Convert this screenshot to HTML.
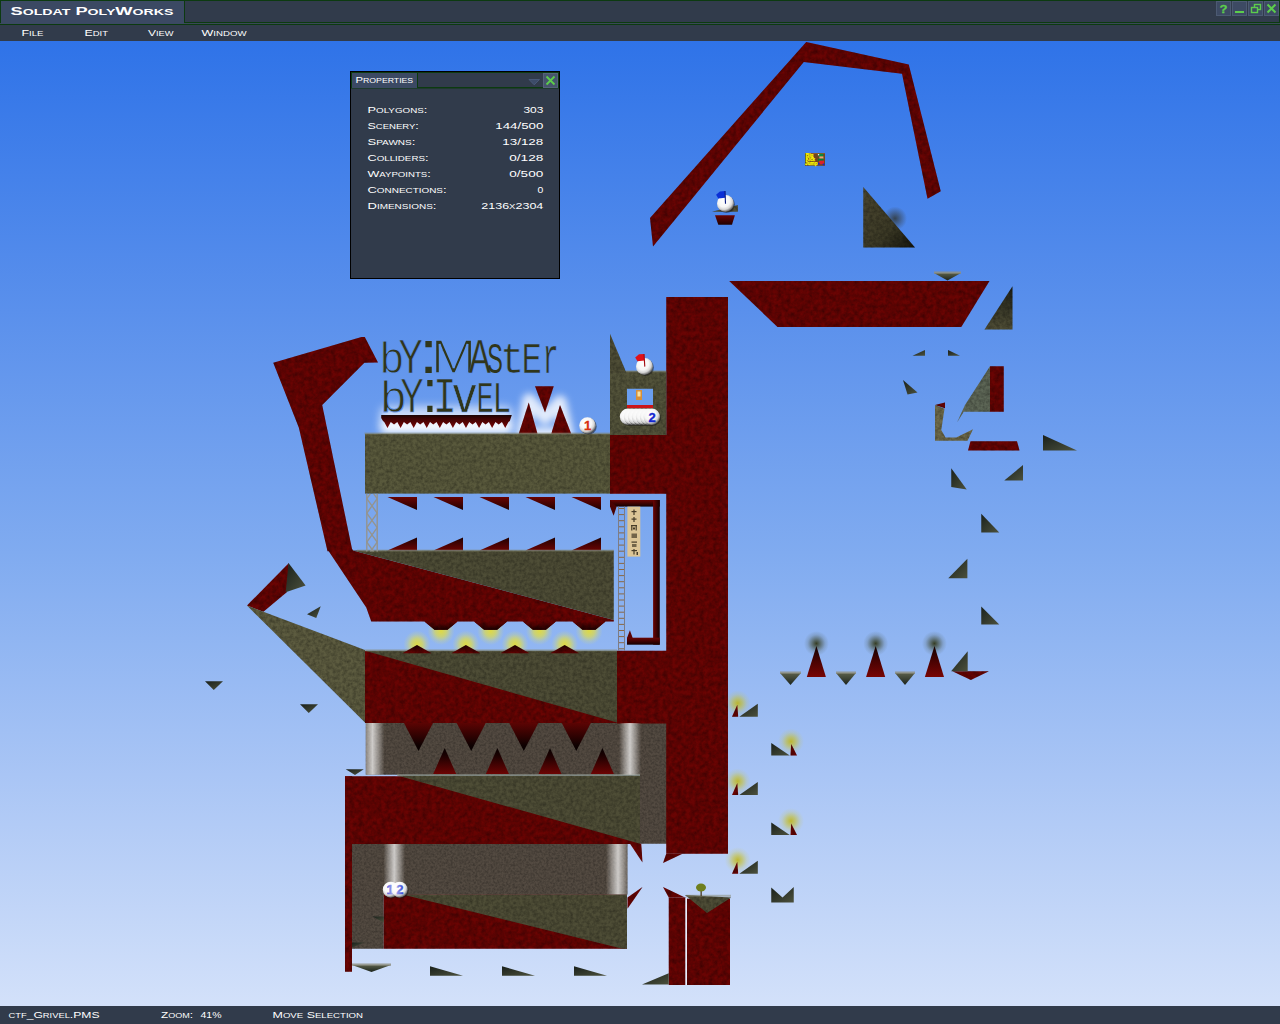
<!DOCTYPE html>
<html lang="en"><head><meta charset="utf-8"><title>Soldat PolyWorks</title>
<style>
html,body{margin:0;padding:0;width:1280px;height:1024px;overflow:hidden;background:#313b4b;}
#sky{position:absolute;left:0;top:41px;width:1280px;height:965px;background:linear-gradient(to bottom,#2f73e8 0%,#5a90ec 28%,#80abf0 53%,#a9c5f5 76%,#d3e1fa 100%);}
svg{position:absolute;left:0;top:0;}
#ui text{font-family:"Liberation Sans",sans-serif;fill:#fff;}
#ui .lc{text-transform:uppercase;}
</style></head><body>
<div id="sky"></div>
<svg id="map" width="1280" height="1024" viewBox="0 0 1280 1024">
<defs>
<radialGradient id="gy"><stop offset="0" stop-color="#c0b410" stop-opacity=".85"/><stop offset=".35" stop-color="#c8be18" stop-opacity=".55"/><stop offset=".7" stop-color="#ccc428" stop-opacity=".17"/><stop offset="1" stop-color="#d0c830" stop-opacity="0"/></radialGradient>
<radialGradient id="gk"><stop offset="0" stop-color="#262800" stop-opacity=".85"/><stop offset=".35" stop-color="#2e3004" stop-opacity=".5"/><stop offset=".7" stop-color="#34360a" stop-opacity=".15"/><stop offset="1" stop-color="#34360a" stop-opacity="0"/></radialGradient>
<radialGradient id="gball" cx=".4" cy=".35" r=".7"><stop offset="0" stop-color="#ffffff"/><stop offset=".5" stop-color="#f6f6f6"/><stop offset=".72" stop-color="#d4d4d4"/><stop offset=".9" stop-color="#6e6e6e"/><stop offset="1" stop-color="#222222"/></radialGradient>
<linearGradient id="gpil" x1="0" x2="1" y1="0" y2="0"><stop offset="0" stop-color="#fff" stop-opacity="0"/><stop offset=".25" stop-color="#fff" stop-opacity=".38"/><stop offset=".5" stop-color="#fff" stop-opacity=".72"/><stop offset=".75" stop-color="#fff" stop-opacity=".38"/><stop offset="1" stop-color="#fff" stop-opacity="0"/></linearGradient>
<linearGradient id="gdn" x1="0" x2="0" y1="0" y2="1"><stop offset="0" stop-color="#5c0403"/><stop offset=".8" stop-color="#0e0101"/><stop offset="1" stop-color="#060000"/></linearGradient>
<linearGradient id="gup" x1="0" x2="0" y1="0" y2="1"><stop offset="0" stop-color="#060000"/><stop offset=".3" stop-color="#1c0101"/><stop offset="1" stop-color="#6c0403"/></linearGradient>
<linearGradient id="gdn2" x1="0" x2="0" y1="0" y2="1"><stop offset="0" stop-color="#6a0403"/><stop offset="1" stop-color="#200101"/></linearGradient>
<linearGradient id="gup2" x1="0" x2="0" y1="0" y2="1"><stop offset="0" stop-color="#200101"/><stop offset="1" stop-color="#6a0403"/></linearGradient>
<linearGradient id="gup3" x1="0" x2="0" y1="0" y2="1"><stop offset="0" stop-color="#100000"/><stop offset=".5" stop-color="#4a0202"/><stop offset="1" stop-color="#780504"/></linearGradient>
<linearGradient id="gbush" x1="0" x2="0" y1="0" y2="1"><stop offset="0" stop-color="#5a5f4a"/><stop offset="1" stop-color="#1c241c"/></linearGradient>
<linearGradient id="gfv" x1="0" x2="0" y1="0" y2="1"><stop offset="0" stop-color="#6a0403"/><stop offset="1" stop-color="#140000"/></linearGradient><linearGradient id="gfh" x1="0" x2="1" y1="0" y2="0"><stop offset="0" stop-color="#6a0403"/><stop offset="1" stop-color="#140000"/></linearGradient>
<linearGradient id="gsaw" x1="0" x2="0" y1="0" y2="1"><stop offset="0" stop-color="#1a0404"/><stop offset=".25" stop-color="#3a0303"/><stop offset="1" stop-color="#7a0504"/></linearGradient>
<linearGradient id="gol" x1="0" x2="1" y1="0" y2="1"><stop offset="0" stop-color="#4a4630"/><stop offset=".6" stop-color="#3c3a26"/><stop offset="1" stop-color="#15150c"/></linearGradient><linearGradient id="gol2" x1="0" x2="0" y1="0" y2="1"><stop offset="0" stop-color="#1e2018"/><stop offset="1" stop-color="#504e36"/></linearGradient>
<radialGradient id="gy2"><stop offset="0" stop-color="#ece024" stop-opacity=".85"/><stop offset=".4" stop-color="#ece230" stop-opacity=".62"/><stop offset=".72" stop-color="#f0e840" stop-opacity=".22"/><stop offset="1" stop-color="#f0e850" stop-opacity="0"/></radialGradient><radialGradient id="gk2"><stop offset="0" stop-color="#2c2c1c" stop-opacity=".75"/><stop offset=".5" stop-color="#34342a" stop-opacity=".4"/><stop offset="1" stop-color="#3a3a30" stop-opacity="0"/></radialGradient>
<linearGradient id="gdark" x1="0" x2="1" y1="0" y2="1"><stop offset="0" stop-color="#19201b"/><stop offset="1" stop-color="#4c513d"/></linearGradient>
<filter id="texR" x="0" y="0" width="100%" height="100%" color-interpolation-filters="sRGB"><feTurbulence type="fractalNoise" baseFrequency="0.22" numOctaves="3" seed="4" result="n"/><feColorMatrix in="n" type="matrix" values="0 0 0 0 0  0 0 0 0 0  0 0 0 0 0  0.62 0 0 0 -0.18" result="a"/><feComposite in="a" in2="SourceGraphic" operator="in" result="sh"/><feMerge><feMergeNode in="SourceGraphic"/><feMergeNode in="sh"/></feMerge></filter>
<filter id="texO" x="0" y="0" width="100%" height="100%" color-interpolation-filters="sRGB"><feTurbulence type="fractalNoise" baseFrequency="0.3" numOctaves="3" seed="9" result="n"/><feColorMatrix in="n" type="matrix" values="0 0 0 0 0  0 0 0 0 0  0 0 0 0 0  0 0.55 0 0 -0.175" result="a"/><feComposite in="a" in2="SourceGraphic" operator="in" result="sh"/><feMerge><feMergeNode in="SourceGraphic"/><feMergeNode in="sh"/></feMerge></filter>
<filter id="texC" x="0" y="0" width="100%" height="100%" color-interpolation-filters="sRGB"><feTurbulence type="fractalNoise" baseFrequency="0.45" numOctaves="2" seed="2" result="n"/><feColorMatrix in="n" type="matrix" values="0 0 0 0 0  0 0 0 0 0  0 0 0 0 0  0 0 0.5 0 -0.17" result="a"/><feComposite in="a" in2="SourceGraphic" operator="in" result="sh"/><feMerge><feMergeNode in="SourceGraphic"/><feMergeNode in="sh"/></feMerge></filter>
<clipPath id="cconc"><rect x="365.75" y="723" width="301" height="52"/><rect x="352" y="843.75" width="275.5" height="51"/></clipPath>
<filter id="thin" x="-5%" y="-5%" width="110%" height="110%"><feMorphology operator="erode" radius="0.9 0.3"/></filter>
<filter id="blur5" x="-20%" y="-50%" width="140%" height="200%"><feGaussianBlur stdDeviation="4"/></filter>
<filter id="blur4" x="-40%" y="-40%" width="180%" height="180%"><feGaussianBlur stdDeviation="3.5"/></filter>
</defs>
<g id="back"><rect x="380" y="419" width="133" height="15" rx="6" fill="#fff" opacity=".95" filter="url(#blur5)"/><rect x="380" y="406" width="133" height="18" rx="8" fill="#fff" opacity=".6" filter="url(#blur5)"/><path d="M523,434 L529,400 L545,418 L560,402 L567,434 Z" fill="none" stroke="#fff" stroke-width="13" stroke-linejoin="round" opacity=".8" filter="url(#blur4)"/><ellipse cx="441" cy="631" rx="13.5" ry="14" fill="url(#gy2)"/><ellipse cx="490.6" cy="631" rx="13.5" ry="14" fill="url(#gy2)"/><ellipse cx="539.4" cy="631" rx="13.5" ry="14" fill="url(#gy2)"/><ellipse cx="589" cy="631" rx="13.5" ry="14" fill="url(#gy2)"/><ellipse cx="417" cy="644.5" rx="13.5" ry="14" fill="url(#gy2)"/><ellipse cx="465.9" cy="644.5" rx="13.5" ry="14" fill="url(#gy2)"/><ellipse cx="515" cy="644.5" rx="13.5" ry="14" fill="url(#gy2)"/><ellipse cx="564.7" cy="644.5" rx="13.5" ry="14" fill="url(#gy2)"/><circle cx="737.7" cy="703.2" r="13" fill="url(#gy)"/><circle cx="737.7" cy="781.3" r="13" fill="url(#gy)"/><circle cx="737.7" cy="860.1" r="13" fill="url(#gy)"/><circle cx="791" cy="741.5" r="13" fill="url(#gy)"/><circle cx="791" cy="821" r="13" fill="url(#gy)"/><circle cx="816.4" cy="643.5" r="12.5" fill="url(#gk)"/><circle cx="875.7" cy="643.5" r="12.5" fill="url(#gk)"/><circle cx="934.4" cy="643.5" r="12.5" fill="url(#gk)"/><circle cx="895" cy="218.5" r="12" fill="url(#gk2)"/></g>
<g id="conc" fill="#534a41" filter="url(#texC)"><rect x="365.75" y="723" width="301.25" height="51.7"/><rect x="640" y="774" width="27" height="69.75"/><rect x="352" y="843.75" width="275.5" height="50.75"/><rect x="352" y="894" width="31.75" height="54.75"/></g>
<g id="wsp"><polygon fill="url(#gup3)" points="806.8,677.1 816.4,646 825.9,677.1"/><polygon fill="url(#gup3)" points="866.1,677.1 875.7,646 885.2,677.1"/><polygon fill="url(#gup3)" points="924.9,677.1 934.5,646 944,677.1"/><polygon fill="url(#gdn2)" points="387.5,497 417,497 417,510"/><polygon fill="url(#gup2)" points="387.5,550.5 417,537.5 417,550.5"/><polygon fill="url(#gdn2)" points="433.5,497 463,497 463,510"/><polygon fill="url(#gup2)" points="433.5,550.5 463,537.5 463,550.5"/><polygon fill="url(#gdn2)" points="479.5,497 509,497 509,510"/><polygon fill="url(#gup2)" points="479.5,550.5 509,537.5 509,550.5"/><polygon fill="url(#gdn2)" points="525.5,497 555,497 555,510"/><polygon fill="url(#gup2)" points="525.5,550.5 555,537.5 555,550.5"/><polygon fill="url(#gdn2)" points="571.5,497 601,497 601,510"/><polygon fill="url(#gup2)" points="571.5,550.5 601,537.5 601,550.5"/><polygon fill="url(#gdn2)" points="715,215.2 734.9,215.2 732,224.8 718.3,224.8"/><polygon fill="url(#gdn)" points="404,723 433,723 418.5,751"/><polygon fill="url(#gdn)" points="456.7,723 485.7,723 471.2,751"/><polygon fill="url(#gdn)" points="509.3,723 538.3,723 523.8,751"/><polygon fill="url(#gdn)" points="561.8,723 590.8,723 576.3,751"/><polygon fill="url(#gup)" points="433.2,774 444.7,748 456.2,774"/><polygon fill="url(#gup)" points="485.9,774 497.4,748 508.9,774"/><polygon fill="url(#gup)" points="538.5,774 550,748 561.5,774"/><polygon fill="url(#gup)" points="590.9,774 602.4,748 613.9,774"/></g>
<g id="red" fill="#690403" filter="url(#texR)"><polygon points="650,218 806.25,42 908.75,64.5 940.75,191.25 927.5,198.75 902,73.75 803.75,62 653,246.5"/><polygon points="729.2,281.1 989.5,281.1 961.25,326.9 777.5,326.9"/><rect x="666.25" y="297" width="61.75" height="556.75"/><polygon points="663,863 666.25,853.75 682.5,853.75"/><rect x="610" y="435" width="57" height="58.75"/><rect x="617" y="650.75" width="50" height="72.75"/><polygon points="273.25,362.8 361.5,337 364.8,337 378,362.6 364.4,362.8 322.2,405 352,548.75 353,550.5 613.75,620 613.75,621.5 605.5,621.6 595.5,629.8 582.5,629.8 572.5,621.6 555.9,621.6 545.9,629.8 532.9,629.8 522.9,621.6 507.1,621.6 497.1,629.8 484.1,629.8 474.1,621.6 457.5,621.6 447.5,629.8 434.5,629.8 424.5,621.6 371.25,621.5 366.25,607.5 328.75,551.25 327.5,551.25 298.8,427.5"/><polygon points="247,605.5 288.9,562.9 287,592 263.4,611.8"/><rect x="365" y="651" width="252" height="72"/><rect x="345" y="776.25" width="295" height="67.75"/><rect x="345" y="776.25" width="7" height="195.5"/><rect x="383.75" y="894.5" width="243.25" height="54.25"/><polygon points="630,843.75 641.25,843.75 642.5,862.5"/><polygon points="627.5,897.5 642.5,887 627.5,908.75"/><rect x="668.75" y="897.5" width="16.75" height="87.5"/><rect x="687" y="898.75" width="43" height="86.25"/><polygon points="663,887 685,897.5 668.75,897.5"/><rect x="990" y="366.25" width="13.75" height="45.5"/><polygon points="970.5,441.25 1017,441.25 1019.5,450.5 968,450.5"/><polygon points="935,405 945,402.5 945,408.25"/><polygon points="952.4,671.3 988.9,671.3 970.9,680"/><polygon points="518.75,433.75 528.75,402.5 537.5,433.75"/><polygon points="535,386.25 553.75,386.25 545,412.5"/><polygon points="551.25,433.75 560,405 571.25,433.75"/><polygon points="732,716.75 737.3,704.75 738.2,716.75"/><polygon points="732,795 737.3,783 738.2,795"/><polygon points="732,873.75 737.3,861.75 738.2,873.75"/><polygon points="790.5,755.5 791.2,744 797,755.5"/><polygon points="790.5,835 791.2,823.5 797,835"/></g>
<rect fill="url(#gfv)" x="610" y="500" width="49.75" height="6.6"/><polygon fill="#4a0202" points="610,500 616.6,506.6 613.6,515.7 610,506.6"/><rect fill="url(#gfh)" x="653.1" y="500" width="6.65" height="144.7"/><rect fill="url(#gfv)" x="627" y="637.7" width="32.75" height="7"/><polygon fill="#5a0303" points="627,637.9 629.9,630.25 632.7,637.9"/><polygon fill="url(#gsaw)" points="381.2,415 511.8,415 509.8,421 508.49,422 505.22,427.9 501.95,422 498.68,424.6 495.41,422 492.14,427.9 488.87,422 485.6,424.6 482.33,422 479.06,427.9 475.79,422 472.52,424.6 469.25,422 465.98,427.9 462.71,422 459.44,424.6 456.17,422 452.9,427.9 449.63,422 446.36,424.6 443.09,422 439.82,427.9 436.55,422 433.28,424.6 430.01,422 426.74,427.9 423.47,422 420.2,424.6 416.93,422 413.66,427.9 410.39,422 407.12,424.6 403.85,422 400.58,427.9 397.31,422 394.04,424.6 390.77,422 387.5,427.9 384.23,422 383,421 381.2,418"/>
<g id="olive" fill="#4e4d36" filter="url(#texO)"><rect fill="#59593c" x="365" y="433.75" width="245" height="59.85"/><rect fill="#53533a" x="610" y="371.25" width="56.25" height="63.75"/><polygon points="610,333.75 610,372.5 626.25,372.5"/><polygon points="353,550.5 613.75,550.5 613.75,620"/><polygon fill="#5c5b3f" points="247,605.5 365,650 365,722.5"/><polygon points="365,650.75 617,650.75 617,722.5"/><polygon points="397.5,775.5 640,775.5 640,843.75"/><polygon points="402.5,894.5 627,894.5 627,948.75 622.5,948.75"/><polygon fill="url(#gol)" points="863.25,187 863.25,247.5 915,247.5"/><polygon fill="url(#gol2)" points="1012.5,286.25 1012.5,329.5 984.5,329.5"/><polygon points="685,895 731.25,897.5 707,913"/><polygon fill="#5d6656" points="990,366.25 990,411.75 963.75,411.75 957,422.5 965,405"/><polygon fill="#6e6a4a" points="935,405 935,440.75 967.5,440.75 973,429.25 956.25,437.5 945.5,437.5 941.25,430 944.5,408.75"/><polygon points="712.1,211.8 737.9,205 737.9,211.8"/></g>
<g id="fringes"><rect x="364.5" y="432.55" width="245.5" height="2" fill="#85876f" opacity=".5"/><rect x="626" y="370.3" width="40" height="2" fill="#85876f" opacity=".5"/><rect x="357" y="549.6" width="256.75" height="2" fill="#85876f" opacity=".5"/><rect x="365" y="649.4" width="252" height="2" fill="#85876f" opacity=".5"/><rect x="397" y="774.1" width="243" height="2" fill="#85876f" opacity=".5"/><rect x="686" y="894.8" width="45" height="2" fill="#85876f" opacity=".5"/></g>
<g id="red2" fill="#690403" filter="url(#texR)"><polygon fill="url(#gdn2)" points="605.5,621.6 595.5,629.8 582.5,629.8 572.5,621.6" filter="none"/><polygon fill="url(#gdn2)" points="555.9,621.6 545.9,629.8 532.9,629.8 522.9,621.6" filter="none"/><polygon fill="url(#gdn2)" points="507.1,621.6 497.1,629.8 484.1,629.8 474.1,621.6" filter="none"/><polygon fill="url(#gdn2)" points="457.5,621.6 447.5,629.8 434.5,629.8 424.5,621.6" filter="none"/><polygon fill="url(#gup2)" points="402.5,653.2 417,645 431.5,653.2" filter="none"/><polygon fill="url(#gup2)" points="451.4,653.2 465.9,645 480.4,653.2" filter="none"/><polygon fill="url(#gup2)" points="500.5,653.2 515,645 529.5,653.2" filter="none"/><polygon fill="url(#gup2)" points="550.2,653.2 564.7,645 579.2,653.2" filter="none"/></g>
<g id="dark" fill="url(#gdark)"><polygon points="288.5,562.9 305.6,585.4 285.7,592.3"/><polygon points="307,614.25 320.75,606.25 316.25,618"/><polygon points="205,681.25 223,681.25 213.75,690"/><polygon points="300,704.25 318,704.25 308.75,713"/><polygon points="345.75,769.25 363.75,769.25 355,775"/><polygon points="430,966.25 430,975.75 463,975.75"/><polygon points="502,966.25 502,975.75 535,975.75"/><polygon points="574,966.25 574,975.75 607,975.75"/><polygon points="642,984.5 668.75,973.25 668.75,984.5"/><polygon points="372.5,916.5 383.75,916.5 383.75,922.5"/><polygon points="352,942.5 364,942.5 352,947.5"/><polygon points="912.5,355.75 925,350 925,355.75"/><polygon points="948,350 948,355.75 960,355.75"/><polygon points="903,380 917.5,392.5 907.5,394.5"/><polygon points="1043,435 1043,450.5 1077,450.5"/><polygon points="951.25,468.25 966.75,489.5 951.25,487"/><polygon points="1023,465 1023,480.5 1004.25,480.5"/><polygon points="981.25,513.75 981.25,532.5 999.25,532.5"/><polygon points="967.4,558.75 967.4,578.25 948.25,578.25"/><polygon points="981.25,606.4 981.25,624.4 999.25,624.4"/><polygon points="951.1,671.2 967.7,651.2 967.7,671.2"/><polygon points="771.25,887.5 771.25,902.5 793.75,902.5 793.75,887 782.5,897.5"/><polygon points="739.3,716.75 757.8,703.75 757.8,716.75"/><polygon points="739.3,795 757.8,782 757.8,795"/><polygon points="739.3,873.75 757.8,860.75 757.8,873.75"/><polygon points="771.25,743 771.25,755.5 789.8,755.5"/><polygon points="771.25,822.5 771.25,835 789.8,835"/></g>
<g id="maptext" fill="#30361a" font-family="Liberation Sans, sans-serif"><text><tspan x="380.29" y="372.55" font-size="44.93" textLength="23.23" lengthAdjust="spacingAndGlyphs" stroke="#6195ec" stroke-width="0.9">b</tspan><tspan x="398.50" y="373.00" font-size="47.54" textLength="24.38" lengthAdjust="spacingAndGlyphs" stroke="#6195ec" stroke-width="0.6">Y</tspan><tspan x="419.27" y="373.00" font-size="61.89" textLength="18.63" lengthAdjust="spacingAndGlyphs">:</tspan><tspan x="430.82" y="373.00" font-size="47.54" textLength="45.63" lengthAdjust="spacingAndGlyphs" stroke="#6195ec" stroke-width="1.7">M</tspan><tspan x="468.75" y="373.00" font-size="47.54" textLength="22.08" lengthAdjust="spacingAndGlyphs" stroke="#6195ec" stroke-width="0.3">A</tspan><tspan x="487.13" y="372.58" font-size="41.83" textLength="15.56" lengthAdjust="spacingAndGlyphs">S</tspan><tspan x="500.30" y="372.55" font-size="44.85" textLength="24.00" lengthAdjust="spacingAndGlyphs" font-family="Liberation Mono, monospace" stroke="#6195ec" stroke-width="0.6">t</tspan><tspan x="521.89" y="373.00" font-size="43.04" textLength="19.27" lengthAdjust="spacingAndGlyphs" stroke="#6195ec" stroke-width="0.3">E</tspan><tspan x="542.85" y="373.00" font-size="50.74" textLength="15.77" lengthAdjust="spacingAndGlyphs" font-family="Liberation Mono, monospace" stroke="#6195ec" stroke-width="0.5">r</tspan></text><text><tspan x="380.89" y="411.55" font-size="44.93" textLength="25.08" lengthAdjust="spacingAndGlyphs" stroke="#689aee" stroke-width="0.9">b</tspan><tspan x="400.14" y="412.00" font-size="47.54" textLength="23.51" lengthAdjust="spacingAndGlyphs" stroke="#689aee" stroke-width="0.6">Y</tspan><tspan x="422.35" y="412.00" font-size="61.89" textLength="15.29" lengthAdjust="spacingAndGlyphs">:</tspan><tspan x="433.07" y="412.00" font-size="49.70" textLength="23.55" lengthAdjust="spacingAndGlyphs" font-family="Liberation Mono, monospace" stroke="#689aee" stroke-width="0.7">I</tspan><tspan x="452.63" y="412.00" font-size="50.00" textLength="23.65" lengthAdjust="spacingAndGlyphs" stroke="#689aee" stroke-width="0.6">v</tspan><tspan x="476.97" y="412.00" font-size="43.04" textLength="16.06" lengthAdjust="spacingAndGlyphs" stroke="#689aee" stroke-width="0.3">E</tspan><tspan x="493.65" y="412.00" font-size="43.04" textLength="16.30" lengthAdjust="spacingAndGlyphs" stroke="#689aee" stroke-width="0.3">L</tspan></text></g>
<g id="front"><g stroke="#94948f" stroke-width="1.4" fill="none"><line x1="366.8" y1="493.8" x2="366.8" y2="551.5"/><line x1="377.2" y1="493.8" x2="377.2" y2="551.5"/><path d="M366.8,498.65 L370.3,493.8 M377.2,498.65 L373.7,493.8 M366.8,542.15 L373.5,551.5 M377.2,542.15 L370.5,551.5"/><path d="M366.8,498.65 L377.2,513.15 M377.2,498.65 L366.8,513.15"/><path d="M366.8,513.15 L377.2,527.65 M377.2,513.15 L366.8,527.65"/><path d="M366.8,527.65 L377.2,542.15 M377.2,527.65 L366.8,542.15"/></g><g stroke="#7c7c86" stroke-width="1" fill="none"><line x1="618.5" y1="506.6" x2="618.5" y2="650.7"/><line x1="624.5" y1="506.6" x2="624.5" y2="650.7"/></g><g stroke="#8a6844" stroke-width="1"><line x1="619" y1="508.5" x2="624" y2="508.5"/><line x1="619" y1="514.6" x2="624" y2="514.6"/><line x1="619" y1="520.7" x2="624" y2="520.7"/><line x1="619" y1="526.8" x2="624" y2="526.8"/><line x1="619" y1="532.9" x2="624" y2="532.9"/><line x1="619" y1="539" x2="624" y2="539"/><line x1="619" y1="545.1" x2="624" y2="545.1"/><line x1="619" y1="551.2" x2="624" y2="551.2"/><line x1="619" y1="557.3" x2="624" y2="557.3"/><line x1="619" y1="563.4" x2="624" y2="563.4"/><line x1="619" y1="569.5" x2="624" y2="569.5"/><line x1="619" y1="575.6" x2="624" y2="575.6"/><line x1="619" y1="581.7" x2="624" y2="581.7"/><line x1="619" y1="587.8" x2="624" y2="587.8"/><line x1="619" y1="593.9" x2="624" y2="593.9"/><line x1="619" y1="600" x2="624" y2="600"/><line x1="619" y1="606.1" x2="624" y2="606.1"/><line x1="619" y1="612.2" x2="624" y2="612.2"/><line x1="619" y1="618.3" x2="624" y2="618.3"/><line x1="619" y1="624.4" x2="624" y2="624.4"/><line x1="619" y1="630.5" x2="624" y2="630.5"/><line x1="619" y1="636.6" x2="624" y2="636.6"/><line x1="619" y1="642.7" x2="624" y2="642.7"/><line x1="619" y1="648.8" x2="624" y2="648.8"/></g><rect x="627.4" y="506.6" width="12.9" height="50" fill="#dcc596"/><g fill="#2c2416" opacity=".85"><rect x="631.5" y="511" width="5" height="1.2"/><rect x="633.4" y="509.5" width="1.2" height="5.5"/><rect x="631.5" y="518.5" width="5" height="1.2"/><rect x="633.4" y="517" width="1.2" height="5"/><rect x="631" y="525" width="6" height="1.2"/><rect x="631.2" y="525" width="1.2" height="5.5"/><rect x="635.6" y="525" width="1.2" height="5.5"/><rect x="633" y="527.5" width="2" height="2"/><rect x="631.5" y="533.5" width="5.5" height="4.5" opacity=".7"/><rect x="631.5" y="541.5" width="5.5" height="1.2"/><rect x="632" y="544" width="4.5" height="3" opacity=".7"/><rect x="631.5" y="550" width="5.5" height="1.2"/><rect x="633.4" y="549" width="1.2" height="5.5"/><rect x="636.5" y="552" width="1.5" height="3"/></g><circle cx="645.4" cy="367.4" r="8.5" fill="#151515" opacity=".5"/><circle cx="644.5" cy="366.5" r="8.5" fill="url(#gball)"/><path d="M635.2,357.6 L639,354.2 L644.2,354 L644.2,360.5 L637.5,361.2 Z" fill="#e01018"/><line x1="644" y1="354" x2="644.8" y2="366.6" stroke="#a00c12" stroke-width="1.1"/><circle cx="726.4" cy="204.4" r="8.5" fill="#151515" opacity=".5"/><circle cx="725.5" cy="203.5" r="8.5" fill="url(#gball)"/><path d="M716.1,194.8 L719.9,191.5 L725.2,191 L725.2,197.7 L718.3,198.5 Z" fill="#0a2fd6"/><line x1="725" y1="191" x2="725.5" y2="203.8" stroke="#0a1c80" stroke-width="1.1"/><circle cx="588.4" cy="426.4" r="8.3" fill="#151515" opacity=".5"/><circle cx="587.5" cy="425.5" r="8.3" fill="url(#gball)"/><text x="587.5" y="430" font-size="13" font-weight="bold" fill="#d83010" stroke="#d83010" stroke-width=".3" text-anchor="middle" font-family="Liberation Sans, sans-serif">1</text><rect x="627" y="388.75" width="26" height="16.5" fill="#6a9ef0"/><rect x="636" y="390" width="6" height="10" fill="#d89038"/><rect x="637.5" y="391.5" width="3" height="5" fill="#f8e0a0"/><rect x="627" y="405" width="26" height="3.2" fill="#cc1418"/><circle cx="628.9" cy="417.7" r="8.2" fill="#151515" opacity=".5"/><circle cx="628" cy="416.8" r="8.2" fill="url(#gball)"/><circle cx="632.9" cy="417.7" r="8.2" fill="#151515" opacity=".5"/><circle cx="632" cy="416.8" r="8.2" fill="url(#gball)"/><circle cx="636.9" cy="417.7" r="8.2" fill="#151515" opacity=".5"/><circle cx="636" cy="416.8" r="8.2" fill="url(#gball)"/><circle cx="640.9" cy="417.7" r="8.2" fill="#151515" opacity=".5"/><circle cx="640" cy="416.8" r="8.2" fill="url(#gball)"/><circle cx="644.9" cy="417.7" r="8.2" fill="#151515" opacity=".5"/><circle cx="644" cy="416.8" r="8.2" fill="url(#gball)"/><circle cx="648.9" cy="417.7" r="8.2" fill="#151515" opacity=".5"/><circle cx="648" cy="416.8" r="8.2" fill="url(#gball)"/><circle cx="652.7" cy="417.7" r="8.3" fill="#151515" opacity=".5"/><circle cx="651.8" cy="416.8" r="8.3" fill="url(#gball)"/><text x="652" y="421.5" font-size="13" font-weight="bold" fill="#1428d0" stroke="#1428d0" stroke-width=".4" text-anchor="middle" font-family="Liberation Sans, sans-serif">2</text><circle cx="391.7" cy="890.6" r="8" fill="#151515" opacity=".5"/><circle cx="390.8" cy="889.7" r="8" fill="url(#gball)"/><text x="390" y="894" font-size="13" font-weight="bold" fill="#1428d0" stroke="#1428d0" stroke-width=".4" text-anchor="middle" font-family="Liberation Sans, sans-serif">1</text><circle cx="400.6" cy="890.6" r="8" fill="#151515" opacity=".5"/><circle cx="399.7" cy="889.7" r="8" fill="url(#gball)"/><text x="399.8" y="894" font-size="13" font-weight="bold" fill="#1428d0" stroke="#1428d0" stroke-width=".4" text-anchor="middle" font-family="Liberation Sans, sans-serif">2</text><rect x="805" y="153" width="20" height="12.8" fill="#6e4620"/><rect x="805" y="153" width="20" height="1" fill="#8a5a28"/><g font-size="4.9" font-weight="bold" fill="#ffff00" stroke="#ffff00" stroke-width=".25" font-family="Liberation Sans, sans-serif"><text x="805.8" y="157" textLength="7.5" lengthAdjust="spacingAndGlyphs">Big</text><text x="805.8" y="161.1" textLength="9.2" lengthAdjust="spacingAndGlyphs">Kick</text><text x="805.1" y="165.2" textLength="12.4" lengthAdjust="spacingAndGlyphs">Jump</text></g><rect x="818.6" y="153.8" width="4.6" height="3" fill="#0a8a3c"/><rect x="819.4" y="156.4" width="4" height="2.4" fill="#f0a078"/><rect x="818" y="158.6" width="5.4" height="2.4" fill="#0a7a34"/><rect x="819" y="160.6" width="5" height="3.6" fill="#dc2028"/><rect x="818" y="162.8" width="1.6" height="1.8" fill="#1020d0"/><rect x="822.8" y="163.6" width="1.6" height="1.6" fill="#1020d0"/><rect x="817.9" y="154" width="1.3" height="1.3" fill="#f0f0f0"/><polygon points="934,273 961,273 947.5,280.5" fill="url(#gbush)"/><rect x="934" y="271.5" width="27" height="2.2" fill="#8f9184" opacity=".85"/><polygon points="780,673 801,673 790.5,685" fill="url(#gbush)"/><rect x="780" y="671.5" width="21" height="2.2" fill="#8f9184" opacity=".85"/><polygon points="836,673 856,673 846,685" fill="url(#gbush)"/><rect x="836" y="671.5" width="20" height="2.2" fill="#8f9184" opacity=".85"/><polygon points="895,673 915,673 905,685" fill="url(#gbush)"/><rect x="895" y="671.5" width="20" height="2.2" fill="#8f9184" opacity=".85"/><polygon points="352,965 391,965 371.5,972" fill="url(#gbush)"/><rect x="352" y="963.5" width="39" height="2.2" fill="#8f9184" opacity=".85"/><rect x="700.5" y="889" width="1.3" height="7" fill="#4a3a20"/><ellipse cx="701" cy="887.5" rx="5" ry="4" fill="#6f7f1e"/><g clip-path="url(#cconc)"><rect x="360.5" y="723" width="24" height="51.7" fill="url(#gpil)"/><rect x="619" y="723" width="22" height="51.7" fill="url(#gpil)"/><rect x="383.5" y="844" width="21.5" height="50.5" fill="url(#gpil)"/><rect x="606" y="844" width="24" height="50.5" fill="url(#gpil)"/></g><rect x="685.5" y="898" width="1.5" height="87" fill="#e8eefc"/></g>
</svg>
<svg id="ui" width="1280" height="1024" viewBox="0 0 1280 1024" style="font-family:"Liberation Sans",sans-serif;fill:#fff;">
<rect x="0" y="0" width="1280" height="25" fill="#0c3a10"/>
<rect x="1" y="1" width="1278" height="21" fill="#313b4b"/>
<rect x="0" y="23" width="1280" height="1" fill="#3a4858"/>
<rect x="1" y="1" width="183" height="23" fill="#3b4963"/>
<rect x="184" y="1" width="1" height="22" fill="#0c3a10"/>
<rect x="0" y="25" width="1280" height="16" fill="#313b4b"/>
<text x="10.5" y="15.2" font-weight="bold" textLength="163" lengthAdjust="spacingAndGlyphs"><tspan font-size="11.6">S</tspan><tspan class="lc" font-size="9">oldat</tspan><tspan font-size="11.6"> P</tspan><tspan class="lc" font-size="9">oly</tspan><tspan font-size="11.6">W</tspan><tspan class="lc" font-size="9">orks</tspan></text>
<text x="21.5" y="36.2" textLength="22" lengthAdjust="spacingAndGlyphs"><tspan font-size="9.6">F</tspan><tspan class="lc" font-size="7.4">ile</tspan></text>
<text x="84.5" y="36.2" textLength="23.5" lengthAdjust="spacingAndGlyphs"><tspan font-size="9.6">E</tspan><tspan class="lc" font-size="7.4">dit</tspan></text>
<text x="148" y="36.2" textLength="25.5" lengthAdjust="spacingAndGlyphs"><tspan font-size="9.6">V</tspan><tspan class="lc" font-size="7.4">iew</tspan></text>
<text x="201.5" y="36.2" textLength="45" lengthAdjust="spacingAndGlyphs"><tspan font-size="9.6">W</tspan><tspan class="lc" font-size="7.4">indow</tspan></text>
<rect x="1216.5" y="1.5" width="14" height="14" fill="#3d4a63" stroke="#4c5a72" stroke-width="1"/>
<rect x="1232.5" y="1.5" width="14" height="14" fill="#3d4a63" stroke="#4c5a72" stroke-width="1"/>
<rect x="1248.5" y="1.5" width="14" height="14" fill="#3d4a63" stroke="#4c5a72" stroke-width="1"/>
<rect x="1264.5" y="1.5" width="14" height="14" fill="#3d4a63" stroke="#4c5a72" stroke-width="1"/>
<text x="1219.6" y="13.2" font-size="11.5" font-weight="bold" textLength="8" lengthAdjust="spacingAndGlyphs" style="fill:#5ccd4c;stroke:#5ccd4c;stroke-width:.3">?</text>
<rect x="1235" y="11" width="9" height="2" fill="#5ccd4c"/>
<rect x="1254.5" y="4.5" width="6" height="5" fill="none" stroke="#5ccd4c" stroke-width="1.4"/><rect x="1251.5" y="7.5" width="6" height="5" fill="#3d4a63" stroke="#5ccd4c" stroke-width="1.4"/>
<path d="M1267.5,4.5 L1275.5,12.5 M1275.5,4.5 L1267.5,12.5" stroke="#5ccd4c" stroke-width="2" fill="none"/>
<rect x="0" y="1006" width="1280" height="18" fill="#313b4b"/>
<text x="8.5" y="1018" textLength="91" lengthAdjust="spacingAndGlyphs"><tspan class="lc" font-size="7.4">ctf</tspan><tspan font-size="9.6">_G</tspan><tspan class="lc" font-size="7.4">rivel</tspan><tspan font-size="9.6">.PMS</tspan></text>
<text x="161" y="1018" textLength="32" lengthAdjust="spacingAndGlyphs"><tspan font-size="9.6">Z</tspan><tspan class="lc" font-size="7.4">oom</tspan><tspan font-size="9.6">:</tspan></text>
<text x="200.5" y="1018" textLength="21" lengthAdjust="spacingAndGlyphs"><tspan font-size="9.6">41%</tspan></text>
<text x="272.5" y="1018" textLength="90.5" lengthAdjust="spacingAndGlyphs"><tspan font-size="9.6">M</tspan><tspan class="lc" font-size="7.4">ove</tspan><tspan font-size="9.6"> S</tspan><tspan class="lc" font-size="7.4">election</tspan></text>
<rect x="350" y="71" width="210" height="208" fill="#000"/>
<rect x="351" y="72" width="208" height="206" fill="#313b4b"/>
<rect x="351" y="72" width="208" height="16.5" fill="#0c3a10"/>
<rect x="352" y="73" width="65" height="15" fill="#3b4963"/>
<rect x="418" y="73" width="125" height="14" fill="#313b4b"/>
<rect x="543.5" y="73.5" width="14" height="14" fill="#46546c" stroke="#54627a" stroke-width="1"/>
<path d="M546.5,76.5 L554.5,84.5 M554.5,76.5 L546.5,84.5" stroke="#5ccd4c" stroke-width="1.8" fill="none"/>
<path d="M529,79.5 L539.5,79.5 L534.2,84.8 Z" fill="#3d4c68" stroke="#4c5e80" stroke-width=".8"/>
<text x="355.5" y="83.3" textLength="57.7" lengthAdjust="spacingAndGlyphs"><tspan font-size="9.6">P</tspan><tspan class="lc" font-size="7.4">roperties</tspan></text>
<text x="367.5" y="113" textLength="59.8" lengthAdjust="spacingAndGlyphs"><tspan font-size="9.4">P</tspan><tspan class="lc" font-size="7.2">olygons</tspan><tspan font-size="9.4">:</tspan></text>
<text x="523.4" y="113" textLength="19.9" lengthAdjust="spacingAndGlyphs"><tspan font-size="9.4">303</tspan></text>
<text x="367.5" y="129" textLength="51.3" lengthAdjust="spacingAndGlyphs"><tspan font-size="9.4">S</tspan><tspan class="lc" font-size="7.2">cenery</tspan><tspan font-size="9.4">:</tspan></text>
<text x="495.3" y="129" textLength="48" lengthAdjust="spacingAndGlyphs"><tspan font-size="9.4">144/500</tspan></text>
<text x="367.5" y="145" textLength="47.8" lengthAdjust="spacingAndGlyphs"><tspan font-size="9.4">S</tspan><tspan class="lc" font-size="7.2">pawns</tspan><tspan font-size="9.4">:</tspan></text>
<text x="502.3" y="145" textLength="41" lengthAdjust="spacingAndGlyphs"><tspan font-size="9.4">13/128</tspan></text>
<text x="367.5" y="161" textLength="61" lengthAdjust="spacingAndGlyphs"><tspan font-size="9.4">C</tspan><tspan class="lc" font-size="7.2">olliders</tspan><tspan font-size="9.4">:</tspan></text>
<text x="509.3" y="161" textLength="34" lengthAdjust="spacingAndGlyphs"><tspan font-size="9.4">0/128</tspan></text>
<text x="367.5" y="177" textLength="63.2" lengthAdjust="spacingAndGlyphs"><tspan font-size="9.4">W</tspan><tspan class="lc" font-size="7.2">aypoints</tspan><tspan font-size="9.4">:</tspan></text>
<text x="509.3" y="177" textLength="34" lengthAdjust="spacingAndGlyphs"><tspan font-size="9.4">0/500</tspan></text>
<text x="367.5" y="193" textLength="79.1" lengthAdjust="spacingAndGlyphs"><tspan font-size="9.4">C</tspan><tspan class="lc" font-size="7.2">onnections</tspan><tspan font-size="9.4">:</tspan></text>
<text x="537.5" y="193" textLength="5.8" lengthAdjust="spacingAndGlyphs"><tspan font-size="9.4">0</tspan></text>
<text x="367.5" y="209" textLength="68.9" lengthAdjust="spacingAndGlyphs"><tspan font-size="9.4">D</tspan><tspan class="lc" font-size="7.2">imensions</tspan><tspan font-size="9.4">:</tspan></text>
<text x="481.3" y="209" textLength="62" lengthAdjust="spacingAndGlyphs"><tspan font-size="9.4">2136</tspan><tspan class="lc" font-size="7.2">x</tspan><tspan font-size="9.4">2304</tspan></text>
</svg>
</body></html>
